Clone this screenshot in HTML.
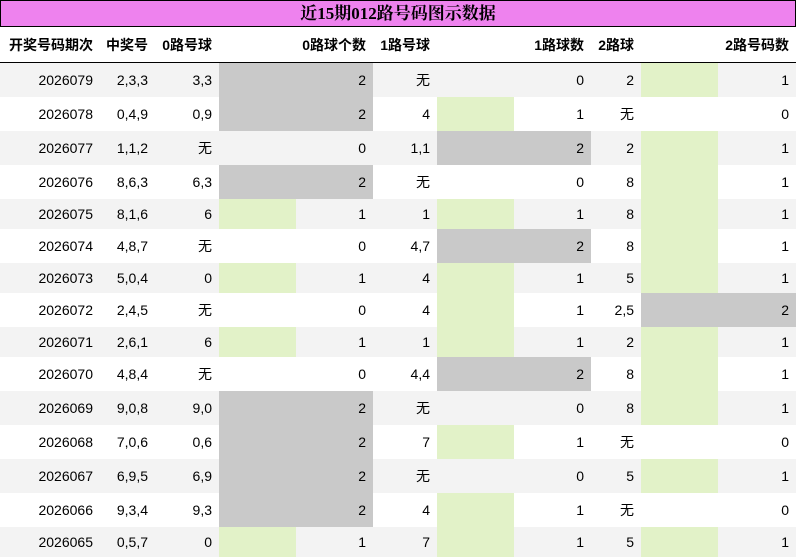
<!DOCTYPE html>
<html><head><meta charset="utf-8"><style>
body{margin:0;width:796px;height:558px;overflow:hidden;background:#fff;font-family:"Liberation Sans","Noto Sans CJK SC",sans-serif;font-size:14px;color:#000;position:relative}
.t{position:absolute;left:0;top:0;width:796px;height:27px;box-sizing:border-box;border:1px solid #000;background:#ee82ee;text-align:center;line-height:25px;font-family:"Liberation Serif","Noto Serif CJK SC",serif;font-weight:bold;font-size:17px}
.h{position:absolute;left:0;top:27px;width:796px;height:35px;border-bottom:2px solid #000;font-weight:bold}
.r{position:absolute;left:0;width:796px;height:34px}
.r.s{height:30px}
.r.o{background:#f3f3f3}
.c{position:absolute;top:0;height:100%;box-sizing:border-box;padding-right:7px;text-align:right;line-height:34px;white-space:nowrap}
.s .c{line-height:30px}
.h .c{line-height:36px}
.b{position:absolute;top:0;height:100%}
.g{background:#e2f2c8}.x{background:#c9c9c9}
.c1{left:0;width:100px}.c2{left:100px;width:55px}.c3{left:155px;width:64px}.c4{left:219px;width:154px}.c5{left:373px;width:64px}.c6{left:437px;width:154px}.c7{left:591px;width:50px}.c8{left:641px;width:155px}
.g0{left:219px;width:77px}.x0{left:219px;width:154px}.g1{left:437px;width:77px}.x1{left:437px;width:154px}.g2{left:641px;width:77px}.x2{left:641px;width:155px}
</style></head><body>
<div class="t">近15期012路号码图示数据</div>
<div class="h"><div class="c c1">开奖号码期次</div><div class="c c2">中奖号</div><div class="c c3">0路号球</div><div class="c c4">0路球个数</div><div class="c c5">1路号球</div><div class="c c6">1路球数</div><div class="c c7">2路球</div><div class="c c8">2路号码数</div></div>

<div class="r o" style="top:63px"><div class="b x x0"></div><div class="b g g2"></div><div class="c c1">2026079</div><div class="c c2">2,3,3</div><div class="c c3">3,3</div><div class="c c4">2</div><div class="c c5">无</div><div class="c c6">0</div><div class="c c7">2</div><div class="c c8">1</div></div>
<div class="r" style="top:97px"><div class="b x x0"></div><div class="b g g1"></div><div class="c c1">2026078</div><div class="c c2">0,4,9</div><div class="c c3">0,9</div><div class="c c4">2</div><div class="c c5">4</div><div class="c c6">1</div><div class="c c7">无</div><div class="c c8">0</div></div>
<div class="r o" style="top:131px"><div class="b x x1"></div><div class="b g g2"></div><div class="c c1">2026077</div><div class="c c2">1,1,2</div><div class="c c3">无</div><div class="c c4">0</div><div class="c c5">1,1</div><div class="c c6">2</div><div class="c c7">2</div><div class="c c8">1</div></div>
<div class="r" style="top:165px"><div class="b x x0"></div><div class="b g g2"></div><div class="c c1">2026076</div><div class="c c2">8,6,3</div><div class="c c3">6,3</div><div class="c c4">2</div><div class="c c5">无</div><div class="c c6">0</div><div class="c c7">8</div><div class="c c8">1</div></div>
<div class="r o s" style="top:199px"><div class="b g g0"></div><div class="b g g1"></div><div class="b g g2"></div><div class="c c1">2026075</div><div class="c c2">8,1,6</div><div class="c c3">6</div><div class="c c4">1</div><div class="c c5">1</div><div class="c c6">1</div><div class="c c7">8</div><div class="c c8">1</div></div>
<div class="r" style="top:229px"><div class="b x x1"></div><div class="b g g2"></div><div class="c c1">2026074</div><div class="c c2">4,8,7</div><div class="c c3">无</div><div class="c c4">0</div><div class="c c5">4,7</div><div class="c c6">2</div><div class="c c7">8</div><div class="c c8">1</div></div>
<div class="r o s" style="top:263px"><div class="b g g0"></div><div class="b g g1"></div><div class="b g g2"></div><div class="c c1">2026073</div><div class="c c2">5,0,4</div><div class="c c3">0</div><div class="c c4">1</div><div class="c c5">4</div><div class="c c6">1</div><div class="c c7">5</div><div class="c c8">1</div></div>
<div class="r" style="top:293px"><div class="b g g1"></div><div class="b x x2"></div><div class="c c1">2026072</div><div class="c c2">2,4,5</div><div class="c c3">无</div><div class="c c4">0</div><div class="c c5">4</div><div class="c c6">1</div><div class="c c7">2,5</div><div class="c c8">2</div></div>
<div class="r o s" style="top:327px"><div class="b g g0"></div><div class="b g g1"></div><div class="b g g2"></div><div class="c c1">2026071</div><div class="c c2">2,6,1</div><div class="c c3">6</div><div class="c c4">1</div><div class="c c5">1</div><div class="c c6">1</div><div class="c c7">2</div><div class="c c8">1</div></div>
<div class="r" style="top:357px"><div class="b x x1"></div><div class="b g g2"></div><div class="c c1">2026070</div><div class="c c2">4,8,4</div><div class="c c3">无</div><div class="c c4">0</div><div class="c c5">4,4</div><div class="c c6">2</div><div class="c c7">8</div><div class="c c8">1</div></div>
<div class="r o" style="top:391px"><div class="b x x0"></div><div class="b g g2"></div><div class="c c1">2026069</div><div class="c c2">9,0,8</div><div class="c c3">9,0</div><div class="c c4">2</div><div class="c c5">无</div><div class="c c6">0</div><div class="c c7">8</div><div class="c c8">1</div></div>
<div class="r" style="top:425px"><div class="b x x0"></div><div class="b g g1"></div><div class="c c1">2026068</div><div class="c c2">7,0,6</div><div class="c c3">0,6</div><div class="c c4">2</div><div class="c c5">7</div><div class="c c6">1</div><div class="c c7">无</div><div class="c c8">0</div></div>
<div class="r o" style="top:459px"><div class="b x x0"></div><div class="b g g2"></div><div class="c c1">2026067</div><div class="c c2">6,9,5</div><div class="c c3">6,9</div><div class="c c4">2</div><div class="c c5">无</div><div class="c c6">0</div><div class="c c7">5</div><div class="c c8">1</div></div>
<div class="r" style="top:493px"><div class="b x x0"></div><div class="b g g1"></div><div class="c c1">2026066</div><div class="c c2">9,3,4</div><div class="c c3">9,3</div><div class="c c4">2</div><div class="c c5">4</div><div class="c c6">1</div><div class="c c7">无</div><div class="c c8">0</div></div>
<div class="r o s" style="top:527px"><div class="b g g0"></div><div class="b g g1"></div><div class="b g g2"></div><div class="c c1">2026065</div><div class="c c2">0,5,7</div><div class="c c3">0</div><div class="c c4">1</div><div class="c c5">7</div><div class="c c6">1</div><div class="c c7">5</div><div class="c c8">1</div></div>
</body></html>
